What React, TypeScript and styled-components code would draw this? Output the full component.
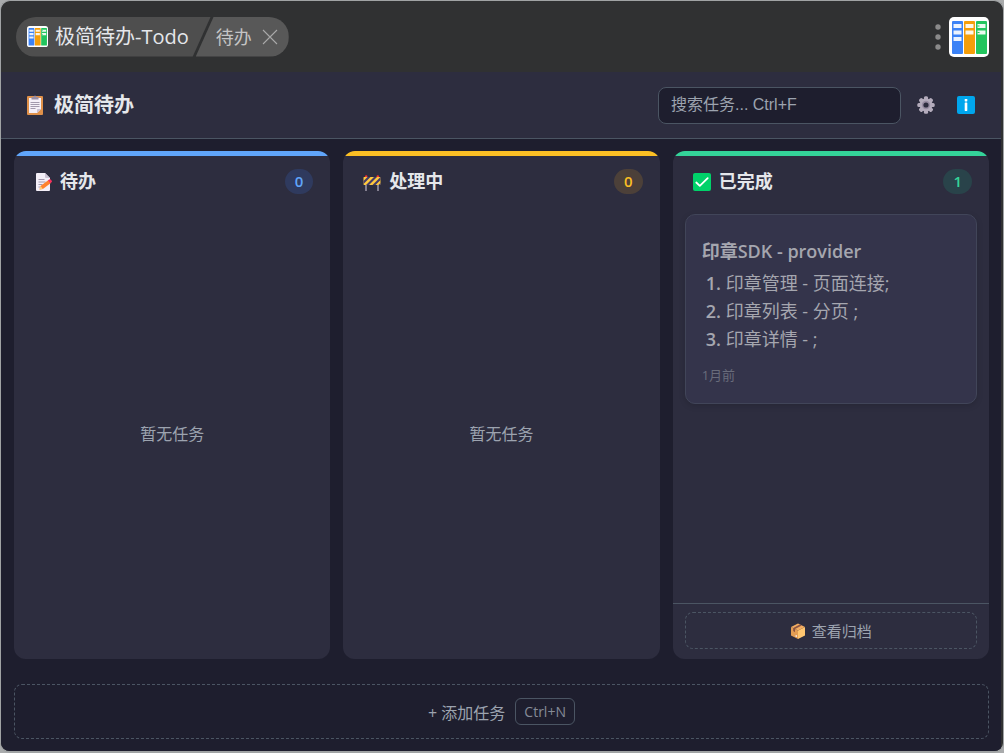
import React from 'react';
import styled, { createGlobalStyle } from 'styled-components';

const GlobalStyle = createGlobalStyle`
  * { box-sizing: border-box; }
  html, body { margin: 0; padding: 0; }
  body {
    background: #a9abac;
    font-family: 'Open Sans', 'Noto Sans CJK SC', sans-serif;
    color: #e5e7eb;
  }
  button, input { font: inherit; color: inherit; }
  button { cursor: pointer; }
  svg { display: block; flex: none; }
`;

const Window = styled.div`
  display: flex;
  flex-direction: column;
  min-height: 100vh;
  border: 1px solid #a0a3a4;
  border-bottom-width: 2px;
  border-radius: 10px;
  background: #303132;
  overflow: hidden;
`;

const TitleBar = styled.header`
  display: flex;
  align-items: center;
  justify-content: space-between;
  height: 71px;
  padding: 0 14px 0 15px;
`;

const Crumbs = styled.nav`
  display: flex;
  height: 40px;
  border-radius: 20px;
  overflow: hidden;
`;

const AppCrumb = styled.div`
  display: flex;
  align-items: center;
  gap: 7px;
  padding: 0 22px 0 11px;
  background: #4e4e4e;
  font-size: 20px;
  line-height: 28px;
  white-space: nowrap;
  clip-path: polygon(0 0, 100% 0, calc(100% - 18px) 100%, 0 100%);
`;

const PageCrumb = styled.div`
  display: flex;
  align-items: center;
  gap: 10px;
  margin-left: -15px;
  padding: 0 11px 0 20px;
  background: #585858;
  color: #c4c4c4;
  font-size: 18px;
  line-height: 28px;
  white-space: nowrap;
  clip-path: polygon(18px 0, 100% 0, 100% 100%, 0 100%);
`;

const PlainButton = styled.button`
  display: flex;
  align-items: center;
  justify-content: center;
  padding: 0;
  border: 0;
  background: none;
`;

const WindowActions = styled.div`
  display: flex;
  align-items: center;
  gap: 8px;
`;

const Content = styled.main`
  flex: 1;
  display: flex;
  flex-direction: column;
  margin-right: 2px;
  background: #1e1e2e;
`;

const Header = styled.div`
  display: flex;
  align-items: center;
  height: 67px;
  padding: 0 15px 0 25px;
  border-bottom: 1px solid #4b5563;
  background: #2d2d3f;
`;

const HeaderTitle = styled.h1`
  flex: 1;
  display: flex;
  align-items: center;
  gap: 10px;
  margin: 0;
  font-size: 20px;
  line-height: 28px;
  font-weight: 700;
`;

const SearchInput = styled.input`
  width: 243px;
  height: 37px;
  margin-right: 5px;
  padding: 0 12px;
  border: 1px solid #4b5563;
  border-radius: 8px;
  background: #1e1e2e;
  font-family: 'Liberation Sans', 'Noto Sans CJK SC', sans-serif;
  font-size: 16px;
  &::placeholder { color: #9ca3af; opacity: 1; }
`;

const IconButton = styled(PlainButton)`
  width: 40px;
  height: 36px;
`;

const Board = styled.div`
  flex: 1;
  display: grid;
  grid-template-columns: repeat(3, minmax(0, 1fr));
  gap: 13px;
  padding: 12px 12px 12px 13px;
`;

const Column = styled.section<{ $accent: string }>`
  display: flex;
  flex-direction: column;
  border-radius: 12px;
  background: linear-gradient(${p => p.$accent} 5px, #2d2d3f 5px);
  overflow: hidden;
`;

const ColumnHead = styled.div`
  display: flex;
  align-items: center;
  justify-content: space-between;
  padding: 18px 17px 12px 20px;
`;

const ColumnTitle = styled.h2`
  display: flex;
  align-items: center;
  gap: 8px;
  margin: 0;
  font-size: 18px;
  line-height: 25px;
  font-weight: 700;
`;

const Count = styled.span<{ $color: string; $tint: string }>`
  padding: 0 10px;
  border-radius: 13px;
  background: ${p => p.$tint};
  color: ${p => p.$color};
  font-size: 15px;
  line-height: 25px;
  font-weight: 600;
`;

const EmptyState = styled.div`
  flex: 1;
  display: flex;
  align-items: center;
  justify-content: center;
  padding-top: 2px;
  color: #9ca3af;
  font-size: 16px;
  line-height: 24px;
`;

const CardList = styled.div`
  flex: 1;
  padding: 8px 12px;
`;

const Card = styled.article`
  padding: 22px 16px 18px;
  border: 1px solid #414559;
  border-radius: 10px;
  background: #34344b;
  box-shadow: 0 2px 6px rgba(0, 0, 0, 0.15);
  color: #a5a6af;
  font-size: 18px;
  line-height: 28px;
`;

const CardTitle = styled.h3`
  margin: 0 0 4px;
  font-size: inherit;
  font-weight: 600;
`;

const CardSteps = styled.ol`
  margin: 0 0 12px;
  padding-left: 24px;
  li::marker { font-weight: 600; }
`;

const CardTime = styled.time`
  display: block;
  color: #696c7b;
  font-size: 13px;
  line-height: 20px;
`;

const ColumnFoot = styled.div`
  padding: 8px 12px 10px;
  border-top: 1px solid #4b5563;
`;

const DashedButton = styled.button`
  display: flex;
  align-items: center;
  justify-content: center;
  width: 100%;
  border: 1px dashed #4b5563;
  background: none;
  color: #9ca3af;
`;

const ArchiveButton = styled(DashedButton)`
  gap: 6px;
  height: 37px;
  border-radius: 8px;
  font-size: 15px;
`;

const Footer = styled.footer`
  padding: 13px 12px 12px 13px;
`;

const AddButton = styled(DashedButton)`
  gap: 10px;
  height: 55px;
  border-radius: 8px;
  font-size: 16px;
`;

const Shortcut = styled.kbd`
  padding: 0 8px;
  border: 1px solid #4b5563;
  border-radius: 6px;
  color: #858b97;
  font-family: inherit;
  font-size: 14px;
  line-height: 25px;
`;

const AppLogo = ({ size }: { size: number }) => (
  <svg width={size} height={size} viewBox="0 0 40 40" aria-hidden="true">
    <rect width="40" height="40" rx="5" fill="#fff" />
    <rect x="3" y="4" width="11" height="33" rx="1" fill="#3b82f6" />
    <rect x="15" y="4" width="11" height="33" rx="1" fill="#f59e0b" />
    <rect x="27" y="4" width="11" height="33" rx="1" fill="#22c55e" />
    <path
      d="M4.500 7h8v4h-8zM4.500 13.500h8v4h-8zM4.500 20h8v4h-8zM16.500 7h8v4h-8zM16.500 13.500h8v4h-8zM28.500 7h8v4h-8zM28.500 13.500h8v4h-8z"
      fill="#fff"
      opacity="0.9"
    />
    <path d="M28.500 8.500h2v1h-2zM28.500 15h2v1h-2z" fill="#22c55e" />
  </svg>
);

const CloseIcon = () => (
  <svg width="16" height="16" viewBox="0 0 16 16" aria-hidden="true">
    <path d="M1 1l14 14M15 1L1 15" stroke="#a8a8a8" strokeWidth="1.1" />
  </svg>
);

const DotsIcon = () => (
  <svg width="6" height="26" viewBox="0 0 6 26" fill="#8a8a8a" aria-hidden="true">
    <circle cx="3" cy="3" r="2.700" />
    <circle cx="3" cy="13" r="2.700" />
    <circle cx="3" cy="23" r="2.700" />
  </svg>
);

const ClipboardIcon = () => (
  <svg width="18" height="20" viewBox="0 0 18 20" aria-hidden="true">
    <rect x="1" y="1" width="16" height="19" rx="1" fill="#e0914a" />
    <path d="M3 3h12v11l-4 4H3z" fill="#f4eff8" />
    <path d="M15 14l-4 4v-3.200q0-.8.8-.8z" fill="#c9c0d3" />
    <path d="M5.500 4.500V2h2Q8 .5 9 .5t1.500 1.500h2v2.500z" fill="#998ea4" />
    <path d="M4.500 7.500h9M4.500 9.500h9M4.500 11.500h9M4.500 13.500h5" stroke="#998ea4" strokeWidth=".9" />
  </svg>
);

const GearIcon = () => (
  <svg width="18" height="18" viewBox="0 0 18 18" aria-hidden="true">
    <g fill="#b4acbc">
      {[0, 45, 90, 135].map(a => (
        <rect key={a} x="6.900" y="0.300" width="4.200" height="17.400" rx="1.500" transform={`rotate(${a} 9 9)`} />
      ))}
      <circle cx="9" cy="9" r="6.500" />
    </g>
    <circle cx="9" cy="9" r="4.200" fill="#998ea4" />
    <circle cx="9" cy="9" r="2.600" fill="#2d2d3f" />
  </svg>
);

const InfoIcon = () => (
  <svg width="18" height="18" viewBox="0 0 18 18" aria-hidden="true">
    <rect width="18" height="18" rx="2" fill="#00a6ed" />
    <rect x="7.700" y="3" width="2.600" height="2.400" rx=".4" fill="#fff" />
    <rect x="7.700" y="6.600" width="2.600" height="8.400" rx=".4" fill="#fff" />
  </svg>
);

const MemoIcon = () => (
  <svg width="18" height="18" viewBox="0 0 18 18" aria-hidden="true">
    <path d="M2 1q0-1 1-1h8l5 5v12q0 1-1 1H3q-1 0-1-1z" fill="#f4eff8" />
    <path d="M11 0l5 5h-4q-1 0-1-1z" fill="#cdc4d6" />
    <path d="M4.500 6.500h6M4.500 9h7M4.500 11.500h4M4.500 14h2" stroke="#998ea4" strokeWidth=".9" />
    <path d="M5.500 16.500l1-3.600 8-6 2.400 3-8 6z" fill="#ff822d" />
    <path d="M5.500 16.500l1-3.600 2.400 3z" fill="#ffce7c" />
    <path d="M14 7.300l1.200-.9q.9-.6 1.600.2l.9 1.200q.6.900-.2 1.500l-1.200.9z" fill="#f8315f" />
  </svg>
);

const BarrierIcon = () => (
  <svg width="18" height="18" viewBox="0 0 18 18" aria-hidden="true">
    <path d="M3 8v10M15 8v10" stroke="#a9a3b3" strokeWidth="1.400" />
    <circle cx="3.200" cy="3.400" r="1.200" fill="#f8312f" />
    <circle cx="14.800" cy="3.400" r="1.200" fill="#f8312f" />
    <rect x=".5" y="4" width="17" height="8" rx=".8" fill="#ffc93d" />
    <path d="M.5 8L4.500 4h3l-7 7zM3 12l8-8h3l-8 8zM9.500 12l8-8v3l-5 5zM15.500 12l2-2v2z" fill="#433b6b" />
  </svg>
);

const CheckIcon = () => (
  <svg width="18" height="18" viewBox="0 0 18 18" aria-hidden="true">
    <rect width="18" height="18" rx="2" fill="#00d26a" />
    <path d="M3.300 9.500l3.500 3.300 7.900-7.600" fill="none" stroke="#fff" strokeWidth="1.800" strokeLinecap="round" strokeLinejoin="round" />
  </svg>
);

const BoxIcon = () => (
  <svg width="16" height="16" viewBox="0 0 16 16" aria-hidden="true">
    <path d="M1 4l7 3.500V16l-7-3.500z" fill="#e39d53" />
    <path d="M15 4L8 7.500V16l7-3.500z" fill="#ffc670" />
    <path d="M8 .5L15 4 8 7.500 1 4z" fill="#f3ad61" />
    <path d="M9.800 1.400l2 1L5 6v3.200L3.200 8V5z" fill="#8c5543" />
    <rect x="5.500" y="12.300" width="1.500" height="1.500" fill="#f3eef8" />
  </svg>
);

interface Task {
  title: string;
  steps: string[];
  time: string;
}

interface ColumnData {
  name: string;
  icon: React.ReactNode;
  accent: string;
  tint: string;
  tasks: Task[];
  archive?: boolean;
}

const columns: ColumnData[] = [
  { name: '待办', icon: <MemoIcon />, accent: '#60a5fa', tint: '#2f3a5e', tasks: [] },
  { name: '处理中', icon: <BarrierIcon />, accent: '#fbbf24', tint: '#4c4039', tasks: [] },
  {
    name: '已完成',
    icon: <CheckIcon />,
    accent: '#34d399',
    tint: '#29434a',
    tasks: [
      {
        title: '印章SDK - provider',
        steps: ['印章管理 - 页面连接;', '印章列表 - 分页 ;', '印章详情 - ;'],
        time: '1月前',
      },
    ],
    archive: true,
  },
];

const TaskCard = ({ task }: { task: Task }) => (
  <Card>
    <CardTitle>{task.title}</CardTitle>
    <CardSteps>
      {task.steps.map(step => <li key={step}>{step}</li>)}
    </CardSteps>
    <CardTime>{task.time}</CardTime>
  </Card>
);

export default function App() {
  return (
    <>
      <GlobalStyle />
      <Window>
        <TitleBar>
          <Crumbs>
            <AppCrumb><AppLogo size={21} />极简待办-Todo</AppCrumb>
            <PageCrumb>
              待办
              <PlainButton type="button" aria-label="关闭"><CloseIcon /></PlainButton>
            </PageCrumb>
          </Crumbs>
          <WindowActions>
            <PlainButton type="button" aria-label="更多"><DotsIcon /></PlainButton>
            <PlainButton type="button" aria-label="极简待办"><AppLogo size={40} /></PlainButton>
          </WindowActions>
        </TitleBar>
        <Content>
          <Header>
            <HeaderTitle><ClipboardIcon />极简待办</HeaderTitle>
            <SearchInput type="text" aria-label="搜索任务" placeholder="搜索任务... Ctrl+F" />
            <IconButton type="button" aria-label="设置"><GearIcon /></IconButton>
            <IconButton type="button" aria-label="关于"><InfoIcon /></IconButton>
          </Header>
          <Board>
            {columns.map(col => (
              <Column key={col.name} $accent={col.accent}>
                <ColumnHead>
                  <ColumnTitle>{col.icon}{col.name}</ColumnTitle>
                  <Count $color={col.accent} $tint={col.tint}>{col.tasks.length}</Count>
                </ColumnHead>
                {col.tasks.length === 0 ? (
                  <EmptyState>暂无任务</EmptyState>
                ) : (
                  <CardList>
                    {col.tasks.map(task => <TaskCard key={task.title} task={task} />)}
                  </CardList>
                )}
                {col.archive && (
                  <ColumnFoot>
                    <ArchiveButton type="button"><BoxIcon />查看归档</ArchiveButton>
                  </ColumnFoot>
                )}
              </Column>
            ))}
          </Board>
          <Footer>
            <AddButton type="button">+ 添加任务 <Shortcut>Ctrl+N</Shortcut></AddButton>
          </Footer>
        </Content>
      </Window>
    </>
  );
}
